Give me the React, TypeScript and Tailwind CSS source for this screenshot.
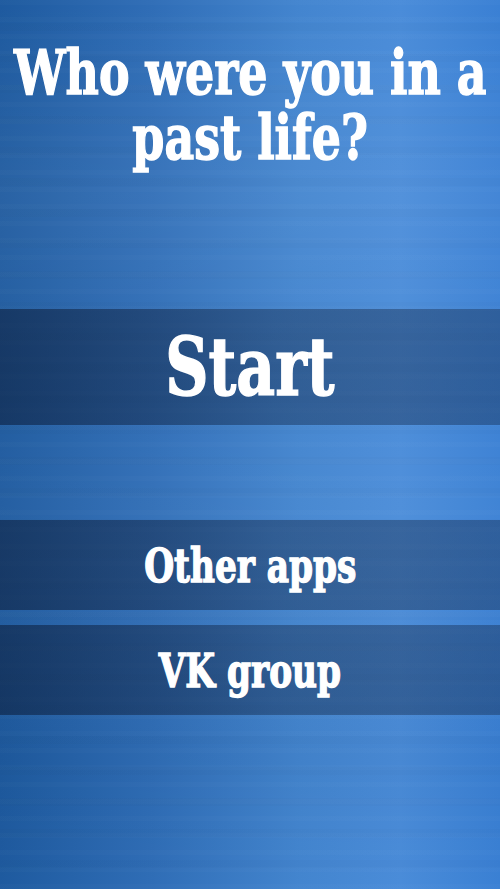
import React from "react";

const font =
  "font-['DejaVu_Serif',serif] font-bold text-white [-webkit-text-stroke:1.5px_white]";

const MenuBar = ({ label, big }: { label: string; big?: boolean }) => (
  <div
    className={`flex w-full items-center justify-center bg-[linear-gradient(90deg,rgba(14,34,66,0.62),rgba(22,44,78,0.45)_55%,rgba(22,44,78,0.42))] ${
      big ? "h-[116px]" : "h-[90px]"
    }`}
  >
    <span
      className={`${font} inline-block whitespace-nowrap leading-none ${
        big ? "scale-x-[0.75] text-[80px]" : "scale-x-[0.73] text-[47px]"
      }`}
    >
      {label}
    </span>
  </div>
);

export default function App() {
  return (
    <div className="relative h-[889px] w-[500px] overflow-hidden bg-[linear-gradient(90deg,#1e5a9f_0%,#2f6db6_30%,#4385cf_60%,#4a8cd9_80%,#3a80d4_100%)]">
      {/* brushed streaks */}
      <div className="pointer-events-none absolute inset-0 bg-[repeating-linear-gradient(180deg,rgba(255,255,255,0.015)_0px,rgba(255,255,255,0.015)_5px,rgba(255,255,255,0)_5px,rgba(255,255,255,0)_17px)]" />
      <div className="pointer-events-none absolute inset-0 bg-[repeating-linear-gradient(180deg,rgba(0,0,0,0)_0px,rgba(0,0,0,0)_23px,rgba(0,0,0,0.015)_23px,rgba(0,0,0,0.015)_31px)]" />
      <div className="pointer-events-none absolute inset-0 bg-[linear-gradient(180deg,rgba(255,255,255,0)_0%,rgba(255,255,255,0.05)_22%,rgba(255,255,255,0.02)_45%,rgba(255,255,255,0.04)_62%,rgba(0,0,0,0.03)_85%,rgba(255,255,255,0)_100%)]" />

      <div className="relative flex flex-col">
        <h1 className="mt-[40px] flex flex-col items-center text-center text-[62px] leading-[65px]">
          <span className={`${font} inline-block scale-x-[0.74] whitespace-nowrap`}>
            Who were you in a
          </span>
          <span className={`${font} inline-block scale-x-[0.74] whitespace-nowrap`}>
            past life?
          </span>
        </h1>

        <div className="mt-[139px]">
          <MenuBar label="Start" big />
        </div>
        <div className="mt-[95px]">
          <MenuBar label="Other apps" />
        </div>
        <div className="mt-[15px]">
          <MenuBar label="VK group" />
        </div>
      </div>
    </div>
  );
}
